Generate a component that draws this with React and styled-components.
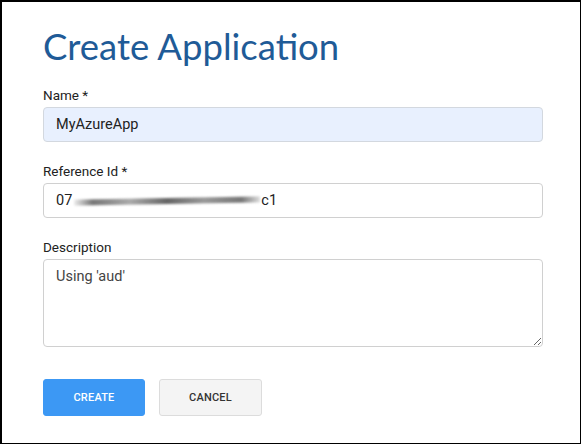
import React from 'react'
import styled, { createGlobalStyle } from 'styled-components';

const GlobalStyle = createGlobalStyle`
  html, body {
    margin: 0;
    padding: 0;
    background: #fff;
  }
`;

const Frame = styled.div`
  box-sizing: border-box;
  width: 581px;
  height: 444px;
  border-top: 2px solid #000;
  border-left: 2px solid #000;
  border-right: 1px solid #000;
  border-bottom: 1px solid #000;
  padding: 22px 0 0 41px;
  font-family: 'Roboto', 'Liberation Sans', sans-serif;
`;

const Title = styled.h1`
  font-family: 'Lato', 'Liberation Sans', sans-serif;
  font-weight: 400;
  font-size: 36.5px;
  line-height: 44px;
  color: #1f5b97;
  margin: 0 0 19px 0;
`;

const Field = styled.div`
  display: flex;
  flex-direction: column;
  gap: 4px;
  margin-bottom: 21px;
`;

const Label = styled.label`
  font-size: 13.5px;
  line-height: 16px;
  color: #222;
`;

const Box = styled.div`
  box-sizing: border-box;
  width: 500px;
  height: 35px;
  display: flex;
  align-items: center;
  padding: 0 12px;
  border: 1px solid ${p => p.$filled ? '#d3d8df' : '#d0d0d0'};
  border-radius: 4px;
  background: ${p => p.$filled ? '#e8f0fe' : '#fff'};
  font-size: 14.5px;
  color: #222;
`;

const Smear = styled.span`
  display: inline-block;
  width: 186px;
  height: 6px;
  margin: 0 1px 0 2px;
  background: linear-gradient(90deg, #eee 0%, #777 10%, #aaa 30%, #666 50%, #999 70%, #777 90%, #ddd 100%);
  filter: blur(1.3px);
  transform: skewY(-1deg);
`;

const TextArea = styled.textarea`
  display: block;
  box-sizing: border-box;
  width: 500px;
  height: 88px;
  padding: 8px 12px;
  border: 1px solid #d0d0d0;
  border-radius: 4px;
  font-family: 'Roboto', 'Liberation Sans', sans-serif;
  font-size: 14.5px;
  color: #444;
  outline: none;
  resize: vertical;
  margin: 0;
`;

const Actions = styled.div`
  display: flex;
  gap: 14px;
  margin-top: 32px;
`;

const Button = styled.button`
  box-sizing: border-box;
  width: ${p => p.$primary ? '102px' : '103px'};
  height: 37px;
  border-radius: 3px;
  border: 1px solid ${p => p.$primary ? '#3c98f4' : '#dcdcdc'};
  background: ${p => p.$primary ? '#3c98f4' : '#f4f4f4'};
  color: ${p => p.$primary ? '#fff' : '#333'};
  font-family: 'Roboto', 'Liberation Sans', sans-serif;
  font-weight: 500;
  font-size: 11px;
  letter-spacing: 0.2px;
  text-transform: uppercase;
  cursor: pointer;
`;

const App = () => {
  return (
    <>
      <GlobalStyle />
      <Frame>
        <Title>Create Application</Title>
        <Field>
          <Label>Name *</Label>
          <Box $filled>MyAzureApp</Box>
        </Field>
        <Field>
          <Label>Reference Id *</Label>
          <Box>07<Smear />c1</Box>
        </Field>
        <Field>
          <Label>Description</Label>
          <TextArea readOnly defaultValue="Using 'aud'" />
        </Field>
        <Actions>
          <Button $primary>Create</Button>
          <Button>Cancel</Button>
        </Actions>
      </Frame>
    </>
  )
}

export default App
